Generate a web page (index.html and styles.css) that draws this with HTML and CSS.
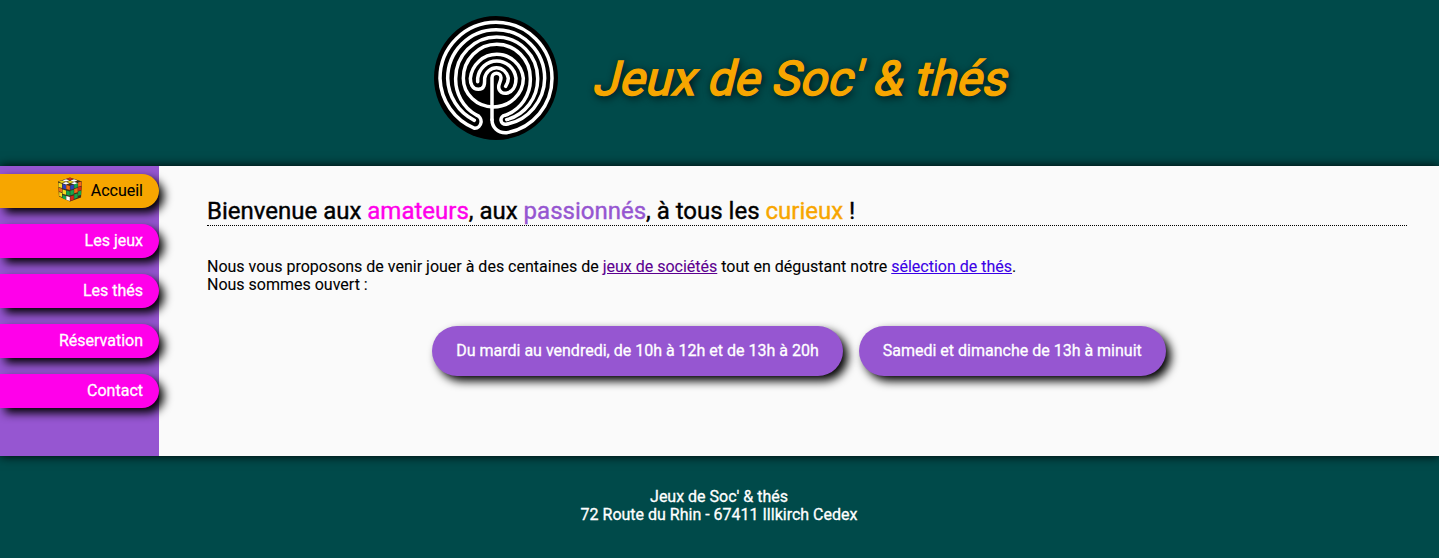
FILE: index.html
```html
<!DOCTYPE html>
<html lang="fr">
<head>
<meta charset="utf-8">
<title>Jeux de Soc' &amp; thés</title>
<link rel="stylesheet" href="styles.css">
</head>
<body>
<header class="header">
  <svg class="logo" viewBox="21 21 378 378" aria-hidden="true">
    <circle cx="210" cy="210" r="186"/>
    <g class="walls">
      <path d="M198 335V209A13.500 13.500 0 0 1 225 209C225 220 218 226 218 237C218 265 270 266 270 211A58 60 0 0 0 155 211V221"/>
      <path d="M239 235C242 230 247 222 247 211A36 38 0 0 0 176 211C176 225 177 244 157 244C138 244 133 226 133 211A80 81 0 0 1 292 211A90 86 0 0 1 112 211A100.500 102 0 0 1 313 211A113 113 0 0 1 237 322A13.500 13.500 0 0 0 240 349A142 142 0 0 0 356 211A145.500 146 0 0 0 65 211A145 145 0 0 0 145 337"/>
      <path d="M242 335A126 126 0 0 0 335 211A123 124 0 0 0 89 211A123 123 0 0 0 151 321A20.500 20.500 0 0 1 146 361A168 168 0 0 1 42 211A168 168 0 0 1 378 211A165 165 0 0 1 242 374C215 376 198 357 198 335"/>
    </g>
  </svg>
  <h1 class="title">Jeux de Soc' &amp; thés</h1>
</header>
<div class="middle">
  <nav class="nav">
    <a class="item active"><svg class="cube" viewBox="0 0 24 24" aria-hidden="true">
      <path fill="#443018" d="M0 4 12 0l12 4-1 16-11 4L1 19z"/>
      <path fill="#e8d51c" d="M.5 4.200 4 3l3.500 1.300L4 5.500zM9 4.300l3-1 4 1-4 1.500z"/>
      <path fill="#fff" d="m4.500 3 3.500-1.200 3.500 1-3.500 1.200zM12.500 3l3.500-1.200 3.500 1.200-3.500 1.200zM4.500 5.800 8 4.600l3.500 1.200L8 7zM13 5.800l3.500-1.200 3.500 1.200L16.500 7z"/>
      <path fill="#d52a18" d="m8.500 1.500 3.500-1.300 3.500 1.300-3.500 1z"/>
      <path fill="#f2dc20" d="m.5 5.300 3.500 1v4.200l-3.500-1zM4.500 12l3.500 1v4.200l-3.500-1zM1.200 14.500l2.800 1v4l-2.800-1z"/>
      <path fill="#2942bd" d="m4.500 6.500 3.500 1v4.200l-3.500-1zM12.300 8l3.500-.9v4.300l-3.500.8z"/>
      <path fill="#f26a16" d="m8.300 7.500 3.500 1v4l-3.500-1zM.8 10.200l3.200 1v3.500l-3.200-1zM16.200 11.500l3.500-1v4.200l-3.500 1zM20.100 5l3.500-1v4.300l-3.500 1z"/>
      <path fill="#15a64b" d="m8.300 13 3.500 1v4.200l-3.500-1zM4.500 17.500l3.500 1v3.800l-3.500-1.500zM12.300 13.300l3.500-1v4.400l-3.500 1zM16.200 17l3.500-1v4l-3.500 1.500zM20.100 14l3-1v4.200l-3 1zM16.200 6.700l3.500-1v4l-3.500 1z"/>
      <path fill="#fff" d="m8.300 18.500 3.500 1v4l-3.500-1.200z"/>
      <path fill="#d6281b" d="m12.300 19 3.500-1v4l-3.500 1.500zM20.100 9.800l3.200-.9v3.500l-3.200 1z"/>
    </svg>Accueil</a>
    <a class="item">Les jeux</a>
    <a class="item">Les thés</a>
    <a class="item">Réservation</a>
    <a class="item">Contact</a>
  </nav>
  <main class="main">
    <h2 class="welcome">Bienvenue aux <span class="pink">amateurs</span>, aux <span class="purple">passionnés</span>, à tous les <span class="orange">curieux</span> !</h2>
    <p class="intro">Nous vous proposons de venir jouer à des centaines de <a class="link visited">jeux de sociétés</a> tout en dégustant notre <a class="link">sélection de thés</a>.<br>Nous sommes ouvert :</p>
    <div class="hours">
      <div class="pill">Du mardi au vendredi, de 10h à 12h et de 13h à 20h</div>
      <div class="pill">Samedi et dimanche de 13h à minuit</div>
    </div>
  </main>
</div>
<footer class="footer">Jeux de Soc' &amp; thés<br>72 Route du Rhin - 67411 Illkirch Cedex</footer>
</body>
</html>
```
FILE: styles.css
```css
* { box-sizing: border-box; }
body { margin: 0; font: 16px/18px Roboto, sans-serif; background: #004a4a; color: #000; height: 558px; overflow: hidden; }
.header { height: 166px; padding: 15px 0 25px 3px; display: flex; justify-content: center; align-items: center; gap: 37px; }
.logo { width: 126px; height: 126px; }
.walls { fill: none; stroke: #fff; stroke-width: 10.500; stroke-linecap: round; stroke-linejoin: round; }
.title { margin: 0; padding-top: 2px; font-size: 48px; line-height: 56px; font-weight: 400; color: #f7a600; text-shadow: 2px 2px 8px #000; -webkit-text-stroke: 1.500px #f7a600; transform: skewX(-14deg); }
.middle { display: flex; height: 290px; background: #fafafa; box-shadow: 0 0 10px #000; }
.nav { width: 159px; background: #9656d1; padding-top: 8px; display: flex; flex-direction: column; gap: 16px; }
.item { height: 34px; padding-right: 16px; display: flex; align-items: center; justify-content: flex-end; border-radius: 0 17px 17px 0; background: #ff00ea; color: #fff; box-shadow: 5px 5px 10px #000; -webkit-text-stroke: .3px; }
.active { background: #f7a600; color: #000; -webkit-text-stroke: .1px; }
.cube { width: 24px; height: 25px; margin: 0 9px 4px 0; }
.main { flex: 1; padding: 31px 32px 0 48px; }
.welcome { margin: 0 0 32px; font-size: 24px; line-height: 28px; font-weight: 400; border-bottom: 1px dotted #000; -webkit-text-stroke: .4px; }
.pink { color: #ff00ea; }
.purple { color: #9656d1; }
.orange { color: #f7a600; }
.intro { margin: 0; -webkit-text-stroke: .1px; }
.link { color: #3a00e6; text-decoration: underline; }
.visited { color: #5c0090; }
.hours { margin-top: 32px; padding-right: 16px; display: flex; justify-content: center; gap: 16px; }
.pill { height: 50px; padding: 16px 24px; border-radius: 25px; background: #9656d1; color: #fff; box-shadow: 5px 5px 10px #000; -webkit-text-stroke: .3px; }
.footer { padding: 32px 1px 0 0; text-align: center; color: #fff; -webkit-text-stroke: .3px; }
```
